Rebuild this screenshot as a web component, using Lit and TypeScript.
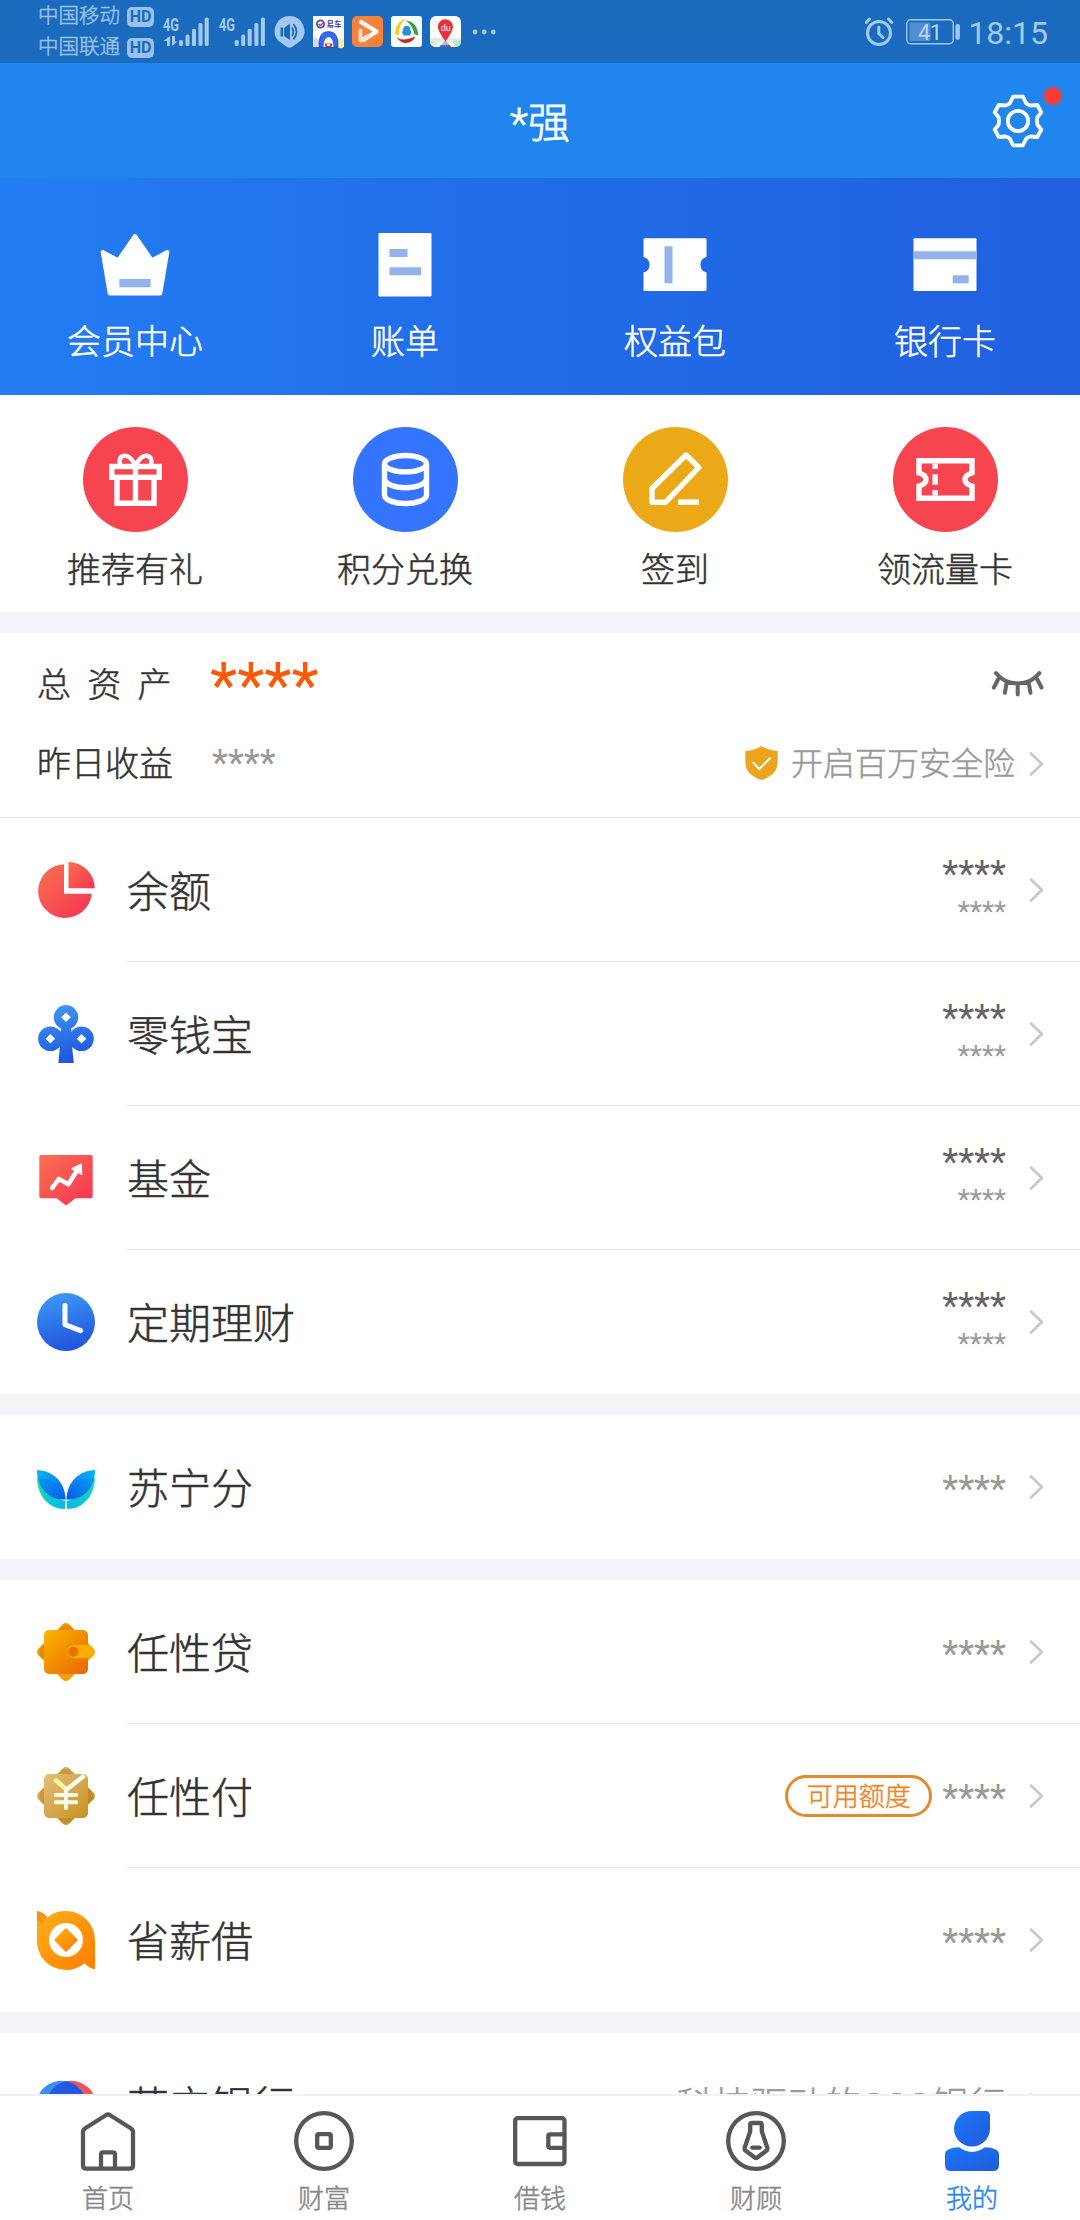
import { LitElement, html, svg, css, nothing, TemplateResult, SVGTemplateResult } from "lit";
import { customElement, property } from "lit/decorators.js";

/* ---------- icon drawings ---------- */

const bars = (xs: number[]) => {
  const tops = [40, 34.5, 28.7, 23, 17.5];
  return xs.map((x, i) => svg`<rect x=${x - 2} y=${tops[i] - 17} width="4" height=${46 - tops[i]} rx="1.6"/>`);
};

const grad = (id: string, a: string, b: string) => svg`
  <linearGradient id=${id} x1="0" y1="0" x2="1" y2="1">
    <stop offset="0" stop-color=${a}/><stop offset="1" stop-color=${b}/>
  </linearGradient>`;

const vgrad = (id: string, a: string, b: string) => svg`
  <linearGradient id=${id} gradientUnits="userSpaceOnUse" x1="20" y1="0" x2="34" y2="58">
    <stop offset="0" stop-color=${a}/><stop offset="1" stop-color=${b}/>
  </linearGradient>`;

const coinHole = (x: number, y: number) =>
  svg`<path fill="#fff" d="M${x} ${y - 4.8}L${x + 4.8} ${y}L${x} ${y + 4.8}L${x - 4.8} ${y}Z"/>`;

const rowIcons: Record<string, SVGTemplateResult> = {
  pie: svg`
    <defs>${grad("g", "#f9714f", "#f73354")}</defs>
    <path fill="url(#g)" d="M27 3.2A26.9 26.9 0 1 0 54.8 32.7H27Z"/>
    <path fill="url(#g)" d="M31.5 1A26.3 26.3 0 0 1 57.8 27.3H31.5Z"/>`,
  club: svg`
    <defs>${vgrad("g", "#3d97f3", "#1f52dd")}</defs>
    <g fill="url(#g)">
      <path d="M24.5 20H33.5Q34 28 38 34Q34.6 40 35.5 46L36.8 57.2Q36.8 58 36 58H22.2Q21.4 58 21.4 57.2L22.5 46Q23.4 40 20 34Q24 28 24.5 20Z"/>
      <circle cx="29" cy="12.3" r="12.2"/><circle cx="13.4" cy="33.7" r="12.3"/><circle cx="44.5" cy="33.7" r="12.3"/>
    </g>
    ${coinHole(29, 12.3)}${coinHole(13.4, 33.7)}${coinHole(44.5, 33.7)}`,
  fund: svg`
    <defs>${grad("g", "#f9714f", "#f73354")}</defs>
    <path fill="url(#g)" d="M4.3 6H53.7Q55.7 6 55.7 8V47.3Q55.7 49.3 53.7 49.3H38.5L30.3 55.4Q29 56.4 27.7 55.4L19.5 49.3H4.3Q2.3 49.3 2.3 47.3V8Q2.3 6 4.3 6Z"/>
    <path fill="none" stroke="#fff" stroke-width="4.6" stroke-linecap="round" stroke-linejoin="round" d="M15.2 39L21.8 30L31.4 35.2L40 21.5"/>
    <path fill="#fff" stroke="#fff" stroke-width="1.4" stroke-linejoin="round" d="M35 19.6L44.3 15.2L44.6 25.4Z"/>`,
  clock: svg`
    <defs>${vgrad("g", "#3d97f3", "#1f52dd")}</defs>
    <circle cx="29" cy="29" r="29" fill="url(#g)"/>
    <path fill="none" stroke="#fff" stroke-width="5" stroke-linecap="round" stroke-linejoin="round" d="M28 12.5V31.7L43.6 37.6"/>`,
  leaf: svg`
    <defs>
      <linearGradient id="g" x1="0" y1="0" x2="1" y2="1"><stop offset="0" stop-color="#08b9f7"/><stop offset="1" stop-color="#0b5cea"/></linearGradient>
      <linearGradient id="h" x1="1" y1="0" x2="0" y2="1"><stop offset="0" stop-color="#08b9f7"/><stop offset="1" stop-color="#0b5cea"/></linearGradient>
      <linearGradient id="t" x1="0" y1="0" x2="1" y2="1"><stop offset="0" stop-color="#18e6a0"/><stop offset="1" stop-color="#08b4ef"/></linearGradient>
      <linearGradient id="u" x1="1" y1="0" x2="0" y2="1"><stop offset="0" stop-color="#18e6a0"/><stop offset="1" stop-color="#08b4ef"/></linearGradient>
    </defs>
    <path fill="url(#t)" d="M0 19C0 38 12 51 28 51L28.400 43Q14 40 0 19Z"/>
    <path fill="url(#u)" d="M58 19C58 38 46 51 30 51L29.600 43Q44 40 58 19Z"/>
    <path fill="url(#g)" d="M0 12C15 12.500 28 23 28.600 41.500C12 42 0 31 0 12Z"/>
    <path fill="url(#h)" d="M58 12C43 12.500 30 23 29.400 41.500C46 42 58 31 58 12Z"/>
    <path fill="#0a5fe0" opacity=".22" d="M1.500 20.500C15 20 26 27 28.600 41.500C14 42 5 34 1.500 20.500ZM56.500 20.500C43 20 32 27 29.400 41.500C44 42 53 34 56.500 20.500Z"/>`,
  wallet: svg`
    <defs>${grad("g", "#fbb500", "#e86600")}${grad("h", "#f2a200", "#f0a000")}</defs>
    <path fill="url(#h)" d="M25.800 1.300Q29 -1.200 32.200 1.300L56.700 25.800Q59.200 29 56.700 32.200L32.200 56.700Q29 59.200 25.800 56.700L1.300 32.200Q-1.200 29 1.300 25.800Z"/>
    <path fill="#e07a00" opacity=".6" d="M21 7L25 3.500Q29 1 33 3.500L37 7ZM7 21L3.500 25Q1 29 3.500 33L7 37Z"/>
    <rect x="7" y="7" width="44" height="44" rx="5" fill="url(#g)"/>
    <path fill="#fdae00" d="M37 22.300H53.200L57.200 26.400Q58.800 29 57.200 31.600L53.800 35.200H37A6.400 6.400 0 0 1 37 22.300Z"/>
    <circle cx="36.400" cy="28.800" r="5" fill="#ea7000"/>`,
  yuan: svg`
    <defs>${grad("g", "#e3bf7c", "#c8901f")}${grad("h", "#dcb877", "#c28a1c")}</defs>
    <path fill="url(#h)" d="M25.800 1.300Q29 -1.200 32.200 1.300L56.700 25.800Q59.200 29 56.700 32.200L32.200 56.700Q29 59.200 25.800 56.700L1.300 32.200Q-1.200 29 1.300 25.800Z"/>
    <path fill="#b57f1d" opacity=".45" d="M21 7L25 3.500Q29 1 33 3.500L37 7ZM7 21L3.500 25Q1 29 3.500 33L7 37ZM51 21L54.500 25Q57 29 54.500 33L51 37ZM21 51H37L33 54.500Q29 57 25 54.500Z"/>
    <rect x="7" y="7" width="44" height="44" rx="5" fill="url(#g)"/>
    <path fill="none" stroke="#fff" stroke-width="4.400" d="M29 23L47.500 8.500"/>
    <path fill="none" stroke="#fdf3a4" stroke-width="4.600" stroke-linecap="round" d="M19 13.500L29 22"/>
    <path fill="none" stroke="#fffce8" stroke-width="4" stroke-linecap="round" stroke-linejoin="round" d="M29 22.800L36 17.500M18.800 28H39.300M18.800 35.300H39.300M29 24V41"/>`,
  loan: svg`
    <defs>${grad("g", "#ffaf1a", "#ff7d00")}</defs>
    <path fill="#f39417" d="M0 0Q7 1 11 7L0 24Z"/>
    <path fill="#f27d0c" d="M58 58Q51 57 47 51L58 34Z"/>
    <path fill="url(#g)" fill-rule="evenodd" d="M29 0A29 29 0 0 1 58 29V58Q51 57 48.500 51.500A29 29 0 0 1 0 29V8Q3 12 5 12.500A29 29 0 0 1 29 0ZM29 12A17 17 0 1 0 29 46A17 17 0 1 0 29 12Z"/>
    <path fill="url(#g)" stroke="url(#g)" stroke-width="2" stroke-linejoin="round" d="M29 18.300L39.600 29L29 39.700L18.400 29Z"/>`,
  bank: svg`
    <circle cx="34" cy="30" r="25.300" fill="#f35158"/>
    <circle cx="24.500" cy="30" r="25.300" fill="#3d8eee"/>
    <path fill="#2458e0" d="M29.300 5.200A25.300 25.300 0 0 1 29.300 54.800A25.300 25.300 0 0 1 29.300 5.200Z"/>`,
};

const bannerIcons: Record<string, SVGTemplateResult> = {
  crown: svg`
    <path fill="#fff" stroke="#fff" stroke-width="4" stroke-linejoin="round" d="M4.700 23L20.200 31.300L37 7L53.800 31.300L69.300 23L62.300 64.500H11.700Z"/>
    <rect x="21.300" y="50" width="31.400" height="8.300" fill="#93b3ec"/>`,
  bill: svg`
    <rect x="10.500" y="4" width="53" height="63.500" rx="1" fill="#fff"/>
    <rect x="21.500" y="20" width="18" height="8" fill="#93b3ec"/>
    <rect x="21.500" y="38.300" width="31.500" height="8" fill="#93b3ec"/>`,
  ticket: svg`
    <path fill="#fff" d="M6.500 9.300H67.500Q68.500 9.300 68.500 10.300V28A8 8 0 0 0 68.500 43.500V61Q68.500 62 67.500 62H6.500Q5.500 62 5.500 61V43.500A8 8 0 0 0 5.500 28V10.300Q5.500 9.300 6.500 9.300Z"/>
    <rect x="26.500" y="17.300" width="8" height="37" fill="#93b3ec"/>`,
  card: svg`
    <rect x="5.500" y="9.300" width="63" height="52.700" rx="1" fill="#fff"/>
    <rect x="5.500" y="22.300" width="63" height="8" fill="#93b3ec"/>
    <rect x="44.700" y="46.300" width="16" height="8" fill="#93b3ec"/>`,
};

const quickIcons: Record<string, SVGTemplateResult> = {
  gift: svg`
    <rect x="-23.700" y="-13" width="47.400" height="10.800"/>
    <path d="M-18.500 -2V23.700H18.500V-2M0 -13V23.700"/>
    <path stroke-width="4.600" d="M0 -13.500C-3 -20 -7 -24 -11 -23.700C-16 -23.300 -17 -18 -15 -14M0 -13.500C3 -20 7 -24 11 -23.700C16 -23.300 17 -18 15 -14"/>`,
  coins: svg`
    <ellipse cx="0" cy="-15.800" rx="21" ry="8.200"/>
    <path d="M-21 -15.800V15.500C-21 20.500 -11 24 0 24C11 24 21 20.500 21 15.500V-15.800M-21 0C-19 5 -11 8.200 0 8.200C11 8.200 19 5 21 0"/>`,
  pen: svg`
    <path stroke-linejoin="round" d="M10.500 -24.500L23.300 -12L-10 22.800H-23.500V9Z"/>
    <path d="M2.500 22.600H23.500"/>`,
  coupon: svg`
    <path d="M-26.500 -18.700H26.500V-6.500C21 -5 19.500 -2 19.500 0C19.500 2 21 5 26.500 6.500V18.700H-26.500V6.500C-21 5 -19.500 2 -19.500 0C-19.500 -2 -21 -5 -26.500 -6.500Z"/>
    <path d="M-10.300 -16V-10.600M-10.300 -5.300V5.300M-10.300 10.600V16"/>`,
};

const tabIcons: Record<string, SVGTemplateResult> = {
  home: svg`<g class="line">
    <path d="M28.200 4Q30 2.700 31.800 4L52.800 17.200Q55 18.700 55 21V54.500Q55 57.700 51.800 57.700H8.200Q5 57.700 5 54.500V21Q5 18.700 7.200 17.200Z"/>
    <path d="M23 57V43.500Q23 41.300 25.200 41.300H34.800Q37 41.300 37 43.500V57"/></g>`,
  wealth: svg`<g class="line"><circle cx="30" cy="30" r="27.800"/><rect x="23.200" y="23.200" width="13.600" height="13.600" rx="1.500"/></g>`,
  borrow: svg`<g class="line"><rect x="5.200" y="7.200" width="49.300" height="45.800" rx="2.500"/><path d="M54 23.400H40Q38.300 23.400 38.300 25.100V35.100Q38.300 36.800 40 36.800H54"/></g>`,
  advisor: svg`<g class="line"><circle cx="30" cy="30" r="27.800"/>
    <path d="M26 12H34Q35.800 12 35.800 13.800V20.500L41.300 36.500Q41.700 38.500 40.300 39.800L31.300 46.500Q30 47.400 28.700 46.500L19.700 39.800Q18.300 38.500 18.700 36.500L24.200 20.500V13.800Q24.200 12 26 12Z"/>
    <path d="M26.300 36.700H33.700"/></g>`,
  me: svg`<defs>${grad("g", "#1a76ff", "#215bd6")}</defs>
    <path fill="url(#g)" d="M30 0H43.500Q48 0 48 4.500V17.500A18 18 0 0 1 12 17.500A18 18 0 0 1 30 0Z"/>
    <path fill="url(#g)" d="M17 36.300Q30 45.500 43 36.300Q57 37.500 57 43V54Q57 60 51 60H9Q3 60 3 54V43Q3 37.500 17 36.300Z"/>`,
};

/* ---------- small building blocks ---------- */

@customElement("line-chevron")
export class LineChevron extends LitElement {
  static styles = css`
    :host { display: block; width: 15px; height: 26px; flex: none; }
    svg { display: block; }
  `;
  render() {
    return html`<svg width="15" height="26" viewBox="0 0 15 26" fill="none" stroke="#c9c9c9" stroke-width="2.800" stroke-linecap="round" stroke-linejoin="round"><path d="M2 2.500L12.800 13L2 23.500"/></svg>`;
  }
}

interface Row { icon: string; title: string; top?: string; sub?: string; note?: string; badge?: string }

@customElement("account-row")
export class AccountRow extends LitElement {
  @property({ attribute: false }) row!: Row;

  static styles = css`
    :host { display: block; }
    .row { display: flex; align-items: center; height: 144px; padding: 0 36px 0 37px; box-sizing: border-box; }
    .icon { display: block; width: 58px; height: 58px; flex: none; overflow: visible; }
    .title { margin-left: 32px; padding-top: 5px; font-size: 42px; line-height: 60px; color: #333; flex: 1; white-space: nowrap; }
    .values { display: flex; flex-direction: column; align-items: flex-end; margin-right: 23px; white-space: nowrap; }
    .top, .sub, .note { -webkit-text-stroke-width: 0; font-weight: 400; }
    .top { font-size: 37px; line-height: 44px; color: #666; padding-top: 1px; }
    .sub { font-size: 28px; line-height: 36px; color: #999; margin-top: -2px; }
    .note { font-size: 37px; line-height: 44px; color: #999; margin-top: 4px; }
    .note.words { font-weight: 300; -webkit-text-stroke-width: .5px; }
    .badge { box-sizing: border-box; width: 147px; height: 42px; border: 3px solid #e38b2c; border-radius: 21px;
      color: #e9872a; font-size: 26px; line-height: 38px; text-align: center; margin-right: 10px; }
  `;

  render() {
    const r = this.row;
    return html`<div class="row">
      <svg class="icon" viewBox="0 0 58 58">${rowIcons[r.icon]}</svg>
      <div class="title">${r.title}</div>
      ${r.badge ? html`<div class="badge">${r.badge}</div>` : nothing}
      <div class="values">
        ${r.top
          ? html`<div class="top">${r.top}</div><div class="sub">${r.sub}</div>`
          : html`<div class="note ${r.note === "****" ? "" : "words"}">${r.note}</div>`}
      </div>
      <line-chevron></line-chevron>
    </div>`;
  }
}

@customElement("status-bar")
export class StatusBar extends LitElement {
  static styles = css`
    :host { display: flex; height: 63px; box-sizing: border-box; padding: 0 32px 0 38px; background: #1a6bbd;
      color: #a3c9f1; align-items: center; flex: none; }
    .carriers { display: flex; flex-direction: column; width: 116px; height: 63px; padding-top: 1px; box-sizing: border-box; }
    .carrier { display: flex; align-items: center; justify-content: space-between; height: 31px; font-size: 20.500px; line-height: 31px; white-space: nowrap; opacity: .92; }
    .hd { width: 27px; height: 20px; border-radius: 5px; background: #a3c9f1; color: #1a6bbd;
      font: 700 16px/20px Roboto, sans-serif; text-align: center; -webkit-text-stroke-width: 0; }
    svg { display: block; flex: none; fill: #a3c9f1; overflow: visible; -webkit-text-stroke-width: 0; }
    .sig1 { margin-left: 9px; } .sig2 { margin-left: 10px; } .speaker { margin-left: 9px; }
    .app { margin-left: 8px; } .more { margin-left: 11px; }
    .grow { flex: 1; }
    .time { font: 400 32px/36px Roboto, sans-serif; margin-left: 8px; padding-top: 2px; -webkit-text-stroke-width: 0; }
    .battery { margin-left: 12px; }
  `;
  render() {
    return html`
      <div class="carriers">
        <div class="carrier"><span>中国移动</span><span class="hd">HD</span></div>
        <div class="carrier"><span>中国联通</span><span class="hd">HD</span></div>
      </div>
      <svg class="sig1" width="46" height="30" viewBox="163 0 46 30">
        <text x="163" y="13.500" font-family="Roboto" font-weight="700" font-size="17.500" textLength="16" lengthAdjust="spacingAndGlyphs">4G</text>
        <path d="M167 19V29H170V19L163.500 24H168ZM172 19V29L177.500 24.500H175V19Z"/>
        ${bars([181, 187.500, 194, 200.500, 206.700])}
      </svg>
      <svg class="sig2" width="46" height="30" viewBox="219 0 46 30">
        <text x="219" y="13.500" font-family="Roboto" font-weight="700" font-size="17.500" textLength="16" lengthAdjust="spacingAndGlyphs">4G</text>
        ${bars([236.700, 243.200, 249.700, 256.400, 262.900])}
      </svg>
      <svg class="speaker" width="31" height="32" viewBox="0 0 31 32">
        <path d="M15.500 0A15 15 0 0 1 27 24.500L18 31Q15.500 32.500 13 31L4 24.500A15 15 0 0 1 15.500 0Z"/>
        <path fill="#1a6bbd" d="M6.500 11.500H9V20.500H6.500ZM10 12L16 7.500V24L10 20Z"/>
        <path fill="none" stroke="#1a6bbd" stroke-width="1.800" d="M18 11.500Q20.500 15.800 18 20M19.500 8Q25.500 15.800 19.500 23.500"/>
      </svg>
      <svg class="app" width="31" height="31" viewBox="0 0 31 31">
        <rect width="31" height="31" fill="#fff"/>
        <path fill="#f8eca0" d="M31 23.500A5 5 0 1 0 31 31Z"/><path fill="#e4d2f4" d="M0 22A5 5 0 0 1 4 31H0Z"/>
        <circle cx="7.500" cy="8" r="3.600" fill="none" stroke="#3d4bb4" stroke-width="1.800"/><path d="M5.500 8Q8 11 9.500 7" fill="none" stroke="#df3146" stroke-width="1.500"/>
        <text x="13.500" y="10.800" fill="#3943b0" font-family="Noto Sans CJK SC" font-weight="700" font-size="7.500">易车</text>
        <path fill="#2f6cf0" stroke="#24339a" stroke-width=".6" d="M6 31Q5 15.500 15.500 15.500Q26 15.500 25 31Z"/>
        <path fill="#fff" d="M10.500 31Q11 21 15.500 21Q20 21 20.500 31Z"/><path fill="#e02f38" d="M11.500 27.500H19.500L18.500 31H12.500Z"/>
        <path fill="#fff" d="M14 28H17V29.800H14Z"/>
      </svg>
      <svg class="app" width="31" height="31" viewBox="0 0 31 31">
        <rect width="31" height="31" rx="5" fill="#fa8139"/>
        <path d="M9 6L24.500 15.500L11.500 24" fill="none" stroke="#fff" stroke-width="4.300" stroke-linecap="round" stroke-linejoin="round"/>
        <path d="M8.500 14.500V24.500L16 20" fill="none" stroke="#ffe3cb" stroke-width="3.800" stroke-linecap="round" stroke-linejoin="round"/>
      </svg>
      <svg class="app" width="31" height="31" viewBox="0 0 31 31">
        <rect width="31" height="31" rx="3" fill="#fff"/>
        <path fill="#f2cf13" d="M14.500 3.500Q5 5 4 18L8 19.500Q7 9 14.500 3.500Z"/>
        <path fill="#35a345" d="M14.500 4.500Q26 5.500 27.500 19.500L23 18Q22 9 14.500 4.500Z"/>
        <path fill="#d32026" d="M5.500 20.500Q10 26.500 24.500 20.500Q21 27.500 14 27Q8 26 5.500 20.500Z"/>
        <path fill="#2590dc" d="M15.700 9.800Q19.500 10.300 19.300 14L20.500 16.500Q19.500 17.500 19 19.500H12.500Q12 17.500 11 16.500L12.100 14Q12 10.300 15.700 9.800Z"/>
      </svg>
      <svg class="app" width="31" height="31" viewBox="0 0 31 31">
        <rect width="31" height="31" rx="6" fill="#fff"/>
        <path fill="#e8e8e8" d="M0 22H31V26H0Z"/><path fill="#bfe3c4" d="M22 25L31 24V27Q30 31 25 31Z"/><path fill="#e3edd9" d="M0 24L10 24L5 31Q0 30 0 26Z"/>
        <path fill="#8ec3ea" d="M15.500 24L21 31H10Z"/><path fill="#3f6fd8" d="M10.500 29H15.500V31H9.500Z"/><path fill="#de3038" d="M15.500 29H20L21 31H15.500Z"/>
        <path fill="#e63238" d="M15.500 3.200A7.700 7.700 0 0 1 23 11Q22.500 16 15.500 25.500Q8.500 16 7.800 11A7.700 7.700 0 0 1 15.500 3.200Z"/>
        <text x="10.700" y="14.500" fill="#fff" font-family="Roboto" font-weight="400" font-size="9">du</text>
      </svg>
      <svg class="more" width="24" height="6" viewBox="0 0 24 6"><circle cx="3" cy="3" r="2.400"/><circle cx="12.200" cy="3" r="2.400"/><circle cx="21.300" cy="3" r="2.400"/></svg>
      <div class="grow"></div>
      <svg width="30" height="31" viewBox="0 0 30 31">
        <g fill="none" stroke="#a3c9f1" stroke-width="3" stroke-linecap="round"><circle cx="15" cy="17" r="11.500"/><path d="M14.800 11V17.500L19 21.500M2.200 6.500L5.500 3M27.800 6.500L24.500 3"/></g>
      </svg>
      <svg class="battery" width="54" height="26" viewBox="0 0 54 26">
        <rect x="0.800" y="0.800" width="46.500" height="24" rx="4" fill="none" stroke="#a3c9f1" stroke-width="1.400"/>
        <rect x="3.500" y="3.500" width="21" height="18.500" rx="1" opacity=".4"/>
        <rect x="49.500" y="5" width="4.300" height="15.700" rx="2"/>
        <text x="12" y="20.800" fill="#b9d6f5" font-family="Roboto" font-weight="400" font-size="22" textLength="24">41</text>
      </svg>
      <div class="time">18:15</div>`;
  }
}

/* ---------- page ---------- */

const banner = [["crown", "会员中心"], ["bill", "账单"], ["ticket", "权益包"], ["card", "银行卡"]];
const quick = [["gift", "推荐有礼", "red"], ["coins", "积分兑换", "blue"], ["pen", "签到", "gold"], ["coupon", "领流量卡", "red"]];
const tabs = [["home", "首页"], ["wealth", "财富"], ["borrow", "借钱"], ["advisor", "财顾"], ["me", "我的"]];
const groups: Row[][] = [
  ["pie:余额", "club:零钱宝", "fund:基金", "clock:定期理财"].map((s) => {
    const [icon, title] = s.split(":");
    return { icon, title, top: "****", sub: "****" };
  }),
  [{ icon: "leaf", title: "苏宁分", note: "****" }],
  [
    { icon: "wallet", title: "任性贷", note: "****" },
    { icon: "yuan", title: "任性付", note: "****", badge: "可用额度" },
    { icon: "loan", title: "省薪借", note: "****" },
  ],
  [{ icon: "bank", title: "苏宁银行", note: "科技驱动的O2O银行" }],
];

@customElement("app-root")
export class AppRoot extends LitElement {
  static styles = css`
    :host { display: flex; flex-direction: column; width: 1080px; height: 2220px; overflow: hidden; background: #fff;
      font-family: Roboto, "Noto Sans CJK SC", sans-serif; font-weight: 300; color: #333; -webkit-text-stroke-width: .5px; }
    svg { display: block; flex: none; }
    .header { display: grid; grid-template-columns: 1fr auto 1fr; align-items: center; height: 115px; flex: none; background: #2086ee; padding: 0 36px; }
    .name { grid-column: 2; color: #fff; font-size: 42px; line-height: 60px; padding-top: 6px; -webkit-text-stroke-width: .8px; }
    .settings { justify-self: end; position: relative; }
    .dot { position: absolute; right: -18px; top: -7px; width: 18px; height: 18px; border-radius: 50%; background: #fb3b38; }
    .content { flex: 1; min-height: 0; overflow: hidden; }
    .banner { display: grid; grid-template-columns: repeat(4, 1fr); height: 217px; padding-top: 51px; box-sizing: border-box;
      background: linear-gradient(90deg, #237df3, #2271ea 33%, #2168e5 66%, #2160df); color: #fff; }
    .cell { display: flex; flex-direction: column; align-items: center; font-size: 34px; line-height: 48px; white-space: nowrap; }
    .banner .label { margin-top: 18px; }
    .quick { display: grid; grid-template-columns: repeat(4, 1fr); height: 217px; padding-top: 32px; box-sizing: border-box; }
    .disc { width: 105px; height: 105px; border-radius: 50%; }
    .disc.red { background: #f64550; } .disc.blue { background: #3574ff; } .disc.gold { background: #eba918; }
    .quick .label { margin-top: 14px; }
    .gap { height: 21px; background: #f3f4f8; }
    .assets { height: 184px; box-sizing: border-box; padding: 0 36px 0 37px; display: flex; flex-direction: column; }
    .line { display: flex; align-items: center; }
    .total { height: 102px; } .income { height: 57px; }
    .key { width: 173px; font-size: 34px; line-height: 48px; white-space: nowrap; }
    .spaced { letter-spacing: 16.300px; padding-top: 2px; }
    .sum { font-size: 63px; line-height: 70px; color: #fa5a05; font-weight: 400; padding-top: 3px; -webkit-text-stroke-width: 0; }
    .sum, .gain { flex: 1; }
    .gain { font-size: 37px; line-height: 44px; color: #999; font-weight: 400; padding-left: 2px; margin-top: -2px; -webkit-text-stroke-width: 0; }
    .shield { margin-top: -2px; }
    .insure { font-size: 32px; line-height: 48px; color: #999; margin: 0 14px 0 13px; }
    .rule { height: 1px; background: #e5e5e5; }
    .inset { margin: -1px 0 0 127px; }
    .tabs { display: grid; grid-template-columns: repeat(5, 1fr); height: 126px; box-sizing: border-box; flex: none; border-top: 2px solid #f0f1f4; padding-top: 15px; background: #fff; }
    .tab { display: flex; flex-direction: column; align-items: center; font-size: 26px; line-height: 38px; color: #888; gap: 9px; }
    .tab.on { color: #2b87ea; }
    g.line { fill: none; stroke: #575757; stroke-width: 4.300; stroke-linecap: round; stroke-linejoin: round; }
  `;

  private group(rows: Row[], first: boolean): TemplateResult {
    return html`${first ? html`<div class="rule"></div>` : html`<div class="gap"></div>`}
      ${rows.map((r, i) => html`${i ? html`<div class="rule inset"></div>` : nothing}<account-row .row=${r}></account-row>`)}`;
  }

  render() {
    return html`
      <status-bar></status-bar>
      <header class="header">
        <div class="name">*强</div>
        <div class="settings">
          <svg width="54" height="54" viewBox="-28 -27 54 54" fill="none" stroke="#fff" stroke-width="3.800" stroke-linejoin="round">
            <path d="M-5 -24.300H5L8 -18Q9.500 -16 12.500 -15.500L19.300 -16L23.300 -8.500L19.500 -4Q18.600 0 19.500 4L23.300 8.500L19.300 16L12.500 15.500Q9.500 16 8 18L5 24.300H-5L-8 18Q-9.500 16 -12.500 15.500L-19.300 16L-23.300 8.500L-19.500 4Q-18.600 0 -19.500 -4L-23.300 -8.500L-19.300 -16L-12.500 -15.500Q-9.500 -16 -8 -18Z"/>
            <circle r="10.200"/>
          </svg>
          <i class="dot"></i>
        </div>
      </header>
      <main class="content">
        <section class="banner">
          ${banner.map(([icon, label]) => html`<div class="cell"><svg width="74" height="71" viewBox="0 0 74 71">${bannerIcons[icon]}</svg><span class="label">${label}</span></div>`)}
        </section>
        <section class="quick">
          ${quick.map(([icon, label, tone]) => html`<div class="cell">
            <div class="disc ${tone}"><svg width="105" height="105" viewBox="-52.500 -52.500 105 105" fill="none" stroke="#fff" stroke-width="5.400">${quickIcons[icon]}</svg></div>
            <span class="label">${label}</span></div>`)}
        </section>
        <div class="gap"></div>
        <section class="assets">
          <div class="line total">
            <span class="key spaced">总资产</span><span class="sum">****</span>
            <svg width="54" height="28" viewBox="989 669 54 28" fill="none" stroke="#666" stroke-width="4" stroke-linecap="round">
              <path d="M995 672Q1003 682.500 1016.700 682.500Q1030.500 682.500 1038.400 672M997.300 678L992.900 686.500M1005.600 682L1003.900 691.800M1016.700 683V693.500M1027.800 682L1029.500 691.800M1036.100 678L1040.500 686.500"/>
            </svg>
          </div>
          <div class="line income">
            <span class="key">昨日收益</span><span class="gain">****</span>
            <svg class="shield" width="33" height="34" viewBox="0 0 33 34">
              <path fill="#eba51c" d="M16.500 0Q23 4.500 32.700 5V16Q32.500 29 16.500 34Q.5 29 .3 16V5Q10 4.500 16.500 0Z"/>
              <path fill="none" stroke="#fff" stroke-width="2" stroke-linecap="round" d="M8.300 16.700L14.300 23L25 12.300"/>
            </svg>
            <span class="insure">开启百万安全险</span>
            <line-chevron></line-chevron>
          </div>
        </section>
        ${groups.map((g, i) => this.group(g, i === 0))}
      </main>
      <nav class="tabs">
        ${tabs.map(([icon, label]) => html`<div class="tab ${icon === "me" ? "on" : ""}"><svg width="60" height="60" viewBox="0 0 60 60">${tabIcons[icon]}</svg><span>${label}</span></div>`)}
      </nav>`;
  }
}
